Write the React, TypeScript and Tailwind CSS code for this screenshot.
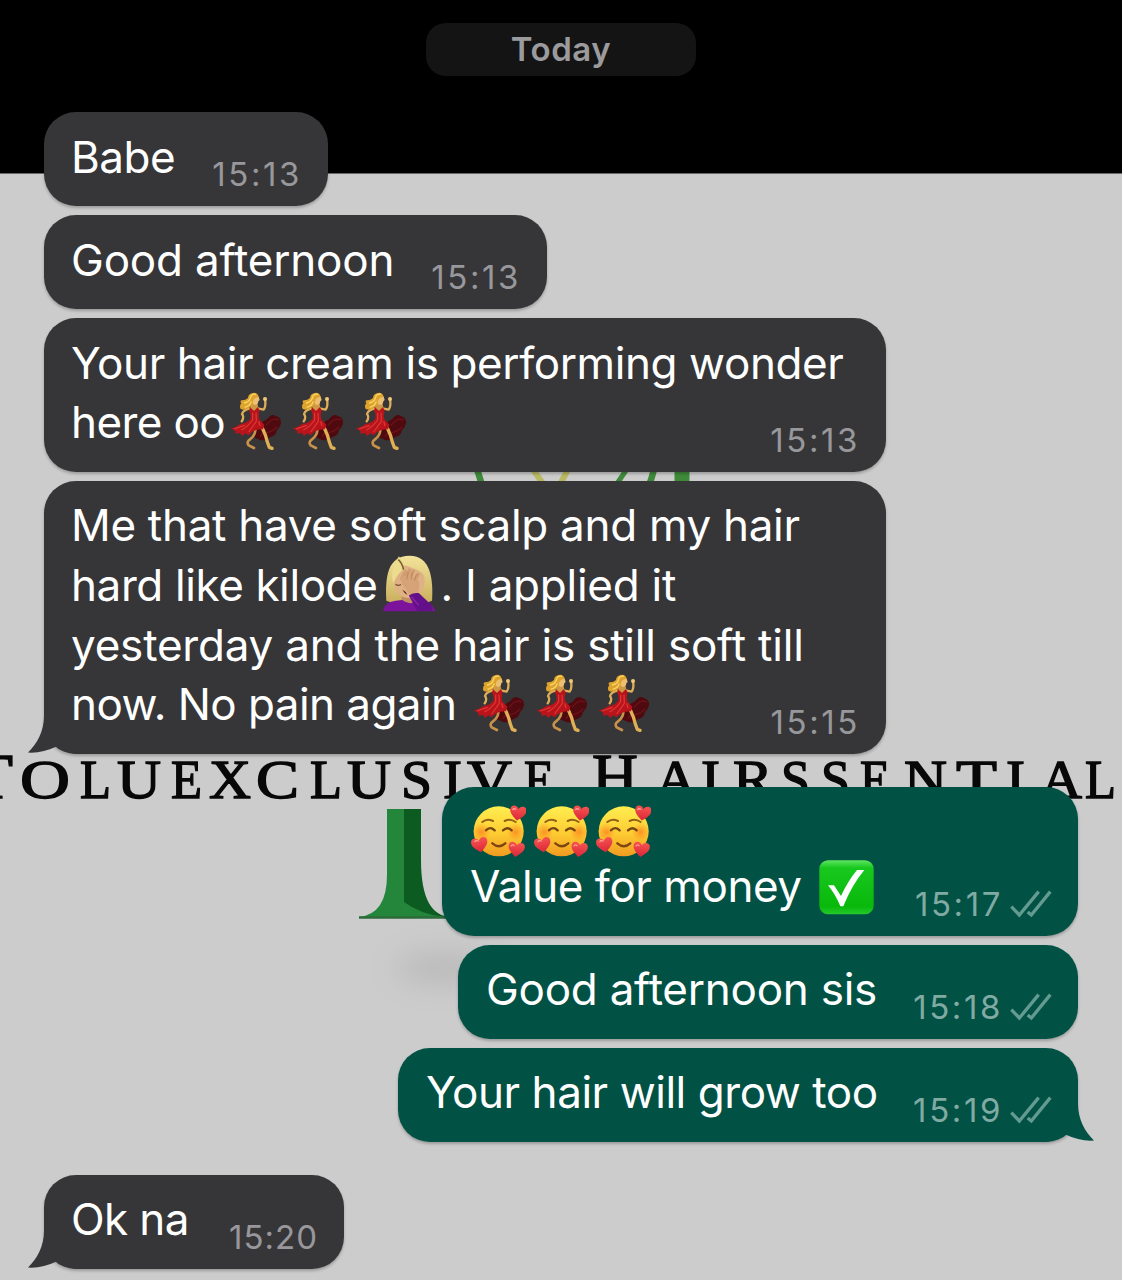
import React from 'react';

function Dancer({ className = '' }: { className?: string }) {
  return (
    <svg viewBox="0 0 156 174" className={`relative -top-[1px] h-[58px] w-[52px] shrink-0 ${className}`}>
      <path d="M86 104C96 84 112 86 116 76Q126 64 138 72Q154 76 153 94Q150 108 141 114Q138 132 120 136Q106 148 90 144L72 136Q66 122 74 110Z" fill="#4e0a0f" />
      <path d="M108 100Q128 74 146 84M100 124Q126 122 142 104M90 134L106 112" stroke="#70131a" strokeWidth="4" fill="none" />
      <path d="M76 116Q74 132 60 142Q48 150 56 160L72 168" stroke="#c8924a" strokeWidth="8" fill="none" strokeLinecap="round" strokeLinejoin="round" />
      <path d="M98 110Q108 130 112 150L118 166L126 169" stroke="#e0b055" strokeWidth="10" fill="none" strokeLinecap="round" strokeLinejoin="round" />
      <path d="M86 50L101 53Q109 42 105 22" stroke="#dcae58" strokeWidth="7" fill="none" strokeLinecap="round" strokeLinejoin="round" />
      <circle cx="105" cy="21" r="6" fill="#efca78" />
      <path d="M58 50Q40 54 36 66Q44 76 35 88" stroke="#dcae58" strokeWidth="7" fill="none" strokeLinecap="round" strokeLinejoin="round" />
      <path d="M66 32H82L86 50L72 58L60 48Z" fill="#cf9847" />
      <path d="M60 46L72 57L83 46L89 54Q84 68 88 82L103 98L99 112Q80 110 66 120L56 130L46 124L36 132L30 123L16 125L16 117L2 109Q20 106 30 96Q50 94 61 80Q64 66 57 56Z" fill="#b9141c" />
      <path d="M68 62L68 84Q54 104 34 114M78 62L79 88L56 120M12 111L44 100M86 88L90 102" stroke="#df3a34" strokeWidth="3.5" fill="none" />
      <path d="M68 8Q82 4 86 14L89 24L85 28Q84 38 76 39Q66 36 64 26Z" fill="#edbf72" />
      <path d="M86 14Q82 0 68 3Q54 6 54 18Q46 26 34 25Q29 29 34 34Q27 42 32 51Q46 56 55 48Q68 42 69 30Q68 18 86 14Z" fill="#dda32c" />
      <path d="M78 7Q64 4 61 18Q58 30 42 33M64 28Q60 42 44 46" stroke="#f9d568" strokeWidth="4" fill="none" />
    </svg>
  );
}

function Facepalm() {
  return (
    <svg viewBox="0 0 160 172" className="relative -top-[1px] ml-[6px] h-[57px] w-[53px] shrink-0">
      <defs>
        <linearGradient id="hair" x1="0" y1="0" x2="0" y2="1">
          <stop offset="0" stopColor="#f3e49b" />
          <stop offset="1" stopColor="#c9ae5c" />
        </linearGradient>
      </defs>
      <path d="M10 138C6 66 14 2 80 2C144 2 152 72 148 138Q128 148 80 148Q30 148 10 138Z" fill="url(#hair)" />
      <path d="M56 112H106V146H56Z" fill="#c18d63" />
      <path d="M32 76C32 44 48 24 76 34C100 46 128 46 126 80C124 112 104 130 79 130C52 130 32 112 32 76Z" fill="#dfb184" />
      <path d="M0 170Q2 143 38 138L58 136Q80 154 106 138Q148 138 158 170Z" fill="#7b139b" />
      <path d="M38 88Q46 95 54 89" stroke="#77512f" strokeWidth="4" fill="none" />
      <path d="M48 4Q62 24 60 44Q42 60 31 86Q18 48 48 4Z" fill="#ecdc8e" />
      <path d="M46 14Q58 24 62 44" stroke="#80602c" strokeWidth="5" fill="none" />
      <path d="M56 72L68 50M68 72L80 46M82 72L92 48M94 78L106 58" stroke="#d09d70" strokeWidth="10" strokeLinecap="round" />
      <path d="M50 68Q84 54 108 78Q112 98 104 118L82 124Q74 106 60 92Z" fill="#d5a377" />
      <path d="M76 52L72 74M88 52L85 74M101 58L95 78" stroke="#b98258" strokeWidth="2.5" />
      <path d="M58 104Q70 110 74 121Q64 116 58 104Z" fill="#51291e" />
      <path d="M78 122Q90 112 108 115L146 151L150 168L104 170Z" fill="#65108b" />
      <path d="M86 126L108 152" stroke="#8c24ac" strokeWidth="4" />
    </svg>
  );
}

function LoveFace() {
  return (
    <svg viewBox="0 0 165 162" className="mt-[9px] h-[54px] w-[55px] shrink-0">
      <defs>
        <linearGradient id="face" x1="0" y1="0" x2="0" y2="1">
          <stop offset="0" stopColor="#ffee50" />
          <stop offset=".55" stopColor="#fdcb32" />
          <stop offset="1" stopColor="#f09a20" />
        </linearGradient>
        <radialGradient id="blush">
          <stop offset="0" stopColor="#fb7e20" stopOpacity=".75" />
          <stop offset="1" stopColor="#fb8a20" stopOpacity="0" />
        </radialGradient>
        <linearGradient id="heart" x1="0" y1="0" x2="0" y2="1">
          <stop offset="0" stopColor="#f65350" />
          <stop offset="1" stopColor="#da2638" />
        </linearGradient>
        <path id="heartShape" d="M0 23C-15 11-27 1-24-12C-22-24-5-24 0-12C5-24 22-24 24-12C27 1 15 11 0 23Z" fill="url(#heart)" />
      </defs>
      <circle cx="83" cy="82" r="75" fill="url(#face)" />
      <circle cx="31" cy="84" r="27" fill="url(#blush)" />
      <circle cx="134" cy="84" r="27" fill="url(#blush)" />
      <path d="M34 54Q48 42 66 51M101 51Q118 42 134 54" stroke="#946018" strokeWidth="6" fill="none" strokeLinecap="round" />
      <path d="M45 79Q57 66 71 79M96 79Q109 66 122 79" stroke="#744413" strokeWidth="7" fill="none" strokeLinecap="round" />
      <path d="M64 118Q84 135 103 118" stroke="#7e4411" strokeWidth="7" fill="none" strokeLinecap="round" />
      <use href="#heartShape" transform="translate(141 27) rotate(8)" />
      <use href="#heartShape" transform="translate(26 122) rotate(-10)" />
      <use href="#heartShape" transform="translate(136 136) rotate(8)" />
      <path d="M125 17Q129 12 134 16M12 113Q16 107 21 111M120 126Q124 120 129 125" stroke="#ff9b93" strokeWidth="4" fill="none" strokeLinecap="round" />
    </svg>
  );
}

function CheckEmoji() {
  return (
    <svg viewBox="0 0 165 165" className="relative top-[1px] ml-[17px] h-[55px] w-[55px] shrink-0">
      <defs>
        <linearGradient id="check" x1="0" y1="0" x2="0" y2="1">
          <stop offset="0" stopColor="#5de561" />
          <stop offset=".14" stopColor="#18c81e" />
          <stop offset=".85" stopColor="#08b80b" />
          <stop offset="1" stopColor="#25c92b" />
        </linearGradient>
      </defs>
      <rect x="1" y="1" width="163" height="162" rx="26" fill="url(#check)" />
      <path d="M27 76H45L66 108Q86 64 114 30H136Q98 76 73 139H64Q50 104 27 76Z" fill="#fff" />
    </svg>
  );
}

function Ticks() {
  return (
    <svg viewBox="0 0 126 84" className="h-7 w-[42px] shrink-0 text-[#639b90]" fill="none" stroke="currentColor" strokeWidth="10">
      <path d="M4 50L28 75L86 5" />
      <path d="M53 66L64 75L121 5" />
    </svg>
  );
}

function Tail({ className }: { className: string }) {
  return (
    <svg viewBox="0 0 56 46" className={`absolute bottom-0 h-[46px] w-[56px] ${className}`} fill="currentColor">
      <path d="M16 0V8C16 23 9 36 0 44.5Q14 45.5 28.5 38.5Q38 46 52 46L56 0Z" />
    </svg>
  );
}

function Bubble({ sent, time, tail, size, timeTracking = 'tracking-[2.6px]', children }: {
  sent?: boolean; time: string; tail?: boolean; size: string; timeTracking?: string; children: React.ReactNode;
}) {
  return (
    <div className={`relative rounded-[32px] shadow-[0_2px_3px_rgba(0,0,0,0.24)] ${sent ? 'self-end bg-[#025145] pl-[28px] text-[#025145]' : 'self-start bg-[#363638] pl-[27px] text-[#363638]'} ${size}`}>
      {tail && <Tail className={sent ? '-right-4 -scale-x-100' : '-left-4'} />}
      <div className="relative whitespace-nowrap text-[44px] leading-[60px] text-white">{children}</div>
      <div className={`absolute bottom-[12.5px] flex items-center whitespace-nowrap text-[33px] leading-[40px] ${timeTracking} ${sent ? 'right-[26px] gap-[7px] text-[#80aaa2]' : 'right-[26px] text-[#98989c]'}`}>
        <span>{time}</span>
        {sent && <Ticks />}
      </div>
    </div>
  );
}

function Line({ className = '', children }: { className?: string; children: React.ReactNode }) {
  return <div className={`flex h-[59.7px] items-center ${className}`}>{children}</div>;
}

type Glyph = [letter: string, x: number, width: number];

const FIRST_WORD: Glyph[] = [
  ['T', -31, 44], ['O', 20, 50], ['L', 80, 31], ['U', 117, 44], ['E', 171, 31], ['X', 209, 42], ['C', 256, 43],
  ['L', 310, 32], ['U', 347, 44], ['S', 401, 31], ['I', 443, 19], ['V', 467, 45], ['E', 524, 30],
];
const SECOND_WORD: Glyph[] = [
  ['H', 592, 46], ['A', 655, 42], ['I', 701, 19], ['R', 733, 40], ['S', 781, 29], ['S', 821, 29], ['E', 860, 30],
  ['N', 904, 43], ['T', 956, 41], ['I', 1006, 19], ['A', 1040, 42], ['L', 1085, 31],
];

function Word({ glyphs }: { glyphs: Glyph[] }) {
  return (
    <>
      {glyphs.map(([letter, x, width], i) => (
        <text key={x} x={x} y="798" fontSize={i === 0 ? 64 : 55} textLength={width} lengthAdjust="spacingAndGlyphs">{letter}</text>
      ))}
    </>
  );
}

function Wallpaper() {
  return (
    <svg viewBox="0 0 1122 1280" className="absolute inset-0 h-full w-full">
      <defs>
        <filter id="soft" x="-100%" y="-200%" width="300%" height="500%"><feGaussianBlur stdDeviation="15" /></filter>
      </defs>
      <rect width="1122" height="1280" fill="#cccccc" />
      <rect width="1122" height="173.5" fill="#000" />
      <g fill="none">
        <path d="M476 466L483 488M648 488Q652 478 655 466" stroke="#3f8a3a" strokeWidth="6.5" />
        <path d="M532 468L546 488M558 488L570 466" stroke="#b9b964" strokeWidth="6" />
        <path d="M614 488L629 466" stroke="#3f8a3a" strokeWidth="5" />
        <path d="M682 466V488" stroke="#3f8a3a" strokeWidth="15" />
      </g>
      <g fontFamily="Liberation Serif, serif" fill="#080808" stroke="#080808" strokeWidth="1.4">
        <Word glyphs={FIRST_WORD} />
        <Word glyphs={SECOND_WORD} />
      </g>
      <ellipse cx="445" cy="968" rx="50" ry="14" fill="#888" opacity=".3" filter="url(#soft)" />
      <path d="M387 809H404V904L421 917H359Q387 914 387 875Z" fill="#23863a" />
      <path d="M404 809H421V860Q421 917 452 917H404Z" fill="#0c5b20" />
      <path d="M376 917Q394 914 404 902Q420 914 444 917Z" fill="#23863a" />
      <path d="M359 917.5H452" stroke="#2c6c3a" strokeWidth="2.5" />
    </svg>
  );
}

export default function App() {
  return (
    <main className="relative h-[1280px] w-[1122px] overflow-hidden font-['Inter',sans-serif]">
      <Wallpaper />
      <div className="relative flex flex-col gap-[9px] px-[44px] pt-[23px]">
        <div className="mb-[27px] flex h-[53px] w-[270px] items-center justify-center self-center rounded-[20px] bg-[#141414] text-[33px] font-semibold tracking-[0.6px] text-[#9b9b9d]">Today</div>

        <Bubble time="15:13" size="h-[94px] w-[284px] pt-[15px]">
          <Line className="tracking-[-0.5px]">Babe</Line>
        </Bubble>
        <Bubble time="15:13" size="h-[94px] w-[503px] pt-[15px]">
          <Line className="tracking-[-0.2px]">Good afternoon</Line>
        </Bubble>
        <Bubble time="15:13" size="h-[154px] w-[842px] pt-[14.7px]">
          <Line className="tracking-[-0.4px]">Your hair cream is performing wonder</Line>
          <Line className="gap-[10.5px] tracking-[-0.6px]"><span className="mr-[-6px]">here oo</span><Dancer /><Dancer /><Dancer /></Line>
        </Bubble>
        <Bubble time="15:15" tail size="h-[273px] w-[842px] pt-[14.4px]">
          <Line className="tracking-[-0.3px]">Me that have soft scalp and my hair</Line>
          <Line><span className="tracking-[-0.4px]">hard like kilode</span><Facepalm /><span className="ml-[4px] tracking-[-0.25px]">. I applied it</span></Line>
          <Line className="tracking-[-0.2px]">yesterday and the hair is still soft till</Line>
          <Line className="gap-[10.5px] tracking-[-0.55px]"><span className="mr-[6px]">now. No pain again</span><Dancer /><Dancer /><Dancer /></Line>
        </Bubble>
        <Bubble sent time="15:17" size="mt-[24px] h-[149px] w-[636px] pt-[9.7px]">
          <Line className="gap-[7.5px] pl-[1px]"><LoveFace /><LoveFace /><LoveFace /></Line>
          <Line><span className="tracking-[-0.45px]">Value for money</span><CheckEmoji /></Line>
        </Bubble>
        <Bubble sent time="15:18" size="h-[94px] w-[620px] pt-[14px]">
          <Line className="tracking-[-0.25px]">Good afternoon sis</Line>
        </Bubble>
        <Bubble sent tail time="15:19" size="h-[94px] w-[680px] pt-[14px]">
          <Line className="tracking-[-0.45px]">Your hair will grow too</Line>
        </Bubble>
        <Bubble tail time="15:20" timeTracking="tracking-[1px]" size="mt-[24px] h-[94px] w-[300px] pt-[14.6px]">
          <Line className="tracking-[-0.6px]">Ok na</Line>
        </Bubble>
      </div>
    </main>
  );
}
